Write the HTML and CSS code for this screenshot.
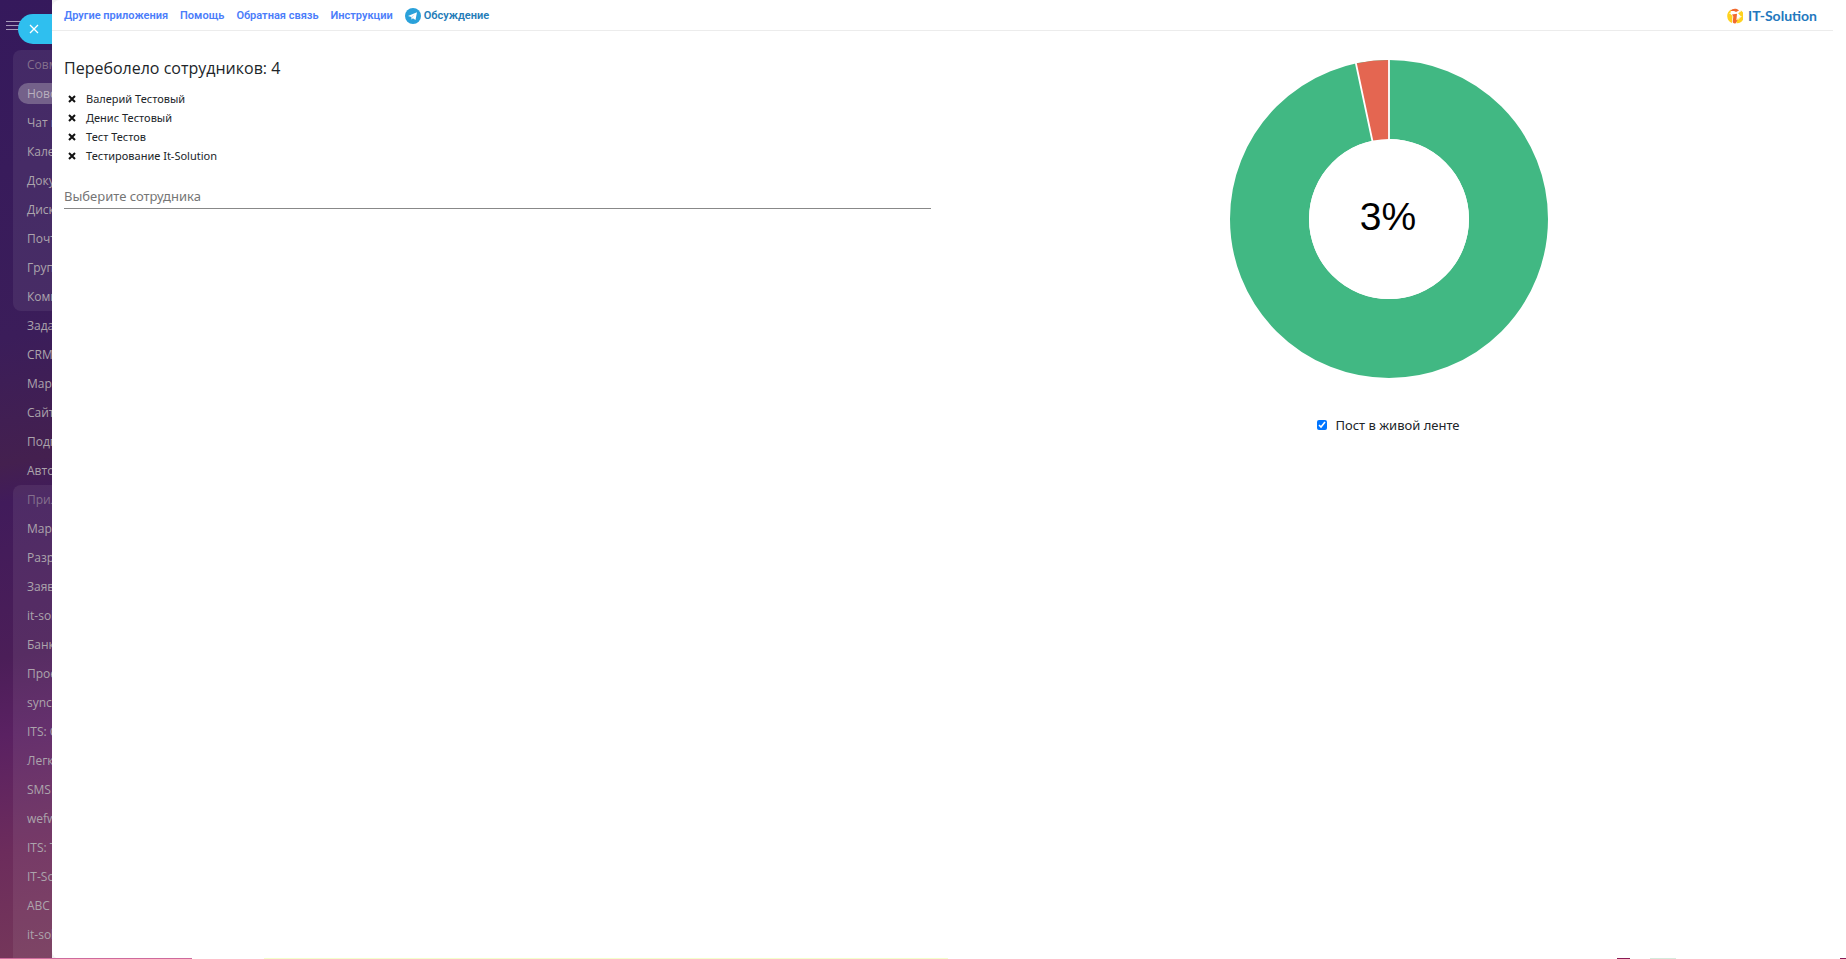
FILE: index.html
```
<!DOCTYPE html>
<html lang="ru">
<head>
    <meta charset="UTF-8">
    <meta name="viewport" content="width=device-width, initial-scale=1.0">
    <title>Переболело сотрудников</title>
    <link rel="stylesheet" href="styles.css">
</head>
<body>
    <aside class="sidebar">
        <div class="sidebar-top">
            <svg class="burger" viewBox="0 0 16 9" width="16" height="9"><path d="M0 .5h16M0 4.500h16M0 8.500h16" stroke="#a79ab8" fill="none"/></svg>
            <button class="close-btn" type="button" aria-label="Закрыть">
                <svg viewBox="0 0 10 10" width="10" height="10"><path d="M1 1l8 8M9 1l-8 8" stroke="#fff" stroke-width="1.3" fill="none"/></svg>
            </button>
        </div>
        <nav class="menu">
            <div class="menu-group">
                <div class="menu-title">Совместная</div>
                <a class="active" href="#">Новости</a>
                <a href="#">Чат и звонки</a>
                <a href="#">Календарь</a>
                <a href="#">Документы</a>
                <a href="#">Диск</a>
                <a href="#">Почта</a>
                <a href="#">Группы</a>
                <a href="#">Компания</a>
            </div>
            <a href="#">Задачи</a>
            <a href="#">CRM</a>
            <a href="#">Маркетинг</a>
            <a href="#">Сайты</a>
            <a href="#">Подпись</a>
            <a href="#">Автоматизация</a>
            <div class="menu-group">
                <div class="menu-title">Приложения</div>
                <a href="#">Маркет</a>
                <a href="#">Разработчикам</a>
                <a href="#">Заявки</a>
                <a href="#">it-solution</a>
                <a href="#">Банк</a>
                <a href="#">Проекты</a>
                <a href="#">sync</a>
                <a href="#">ITS: CRM</a>
                <a href="#">Легкий</a>
                <a href="#">SMS</a>
                <a href="#">wefwef</a>
                <a href="#">ITS: Тест</a>
                <a href="#">IT-Solution</a>
                <a href="#">ABC</a>
                <a href="#">it-solution</a>
                <a href="#">wef</a>
            </div>
        </nav>
    </aside>

    <div class="panel">
        <header class="topbar">
            <a href="#">Другие приложения</a>
            <a href="#">Помощь</a>
            <a href="#">Обратная связь</a>
            <a href="#">Инструкции</a>
            <a class="telegram" href="#">
                <svg viewBox="0 0 16 16" width="16" height="16"><circle cx="8" cy="8" r="8" fill="#2aa1da"/><path d="M3 7.9l9-3.6-1.5 7.8-2.6-1.9-1.3 1.3-.3-2.4z" fill="#fff"/><path d="M6.3 9.1l3.6-2.9-2.8 3.4-.5 1.8z" fill="#b5d5e8"/></svg>
                Обсуждение
            </a>
            <a class="logo" href="#">
                <svg viewBox="0 0 16 16" width="16" height="16">
                    <path d="M4 1.500A7.500 7.500 0 0 0 5 15L5.500 8 3.500 6z" fill="#ffd21f"/>
                    <path d="M11 5l3-2.500A7 7 0 0 1 9.500 15.200L10 11l4-2.500" fill="#ffd21f"/>
                    <path d="M3.500 3C5 .2 10 0 12 2.500L9 4 7 3z" fill="#f26a2e"/>
                    <path d="M5 6.500l5-.8-.6 6.300 1.100.5-2 2.900c-2 .3-3-.7-2.700-2.400l.5-4.500z" fill="#f26a2e"/>
                    <path d="M2.500 5.500l5-1.200 3.500.6 3-2M11 7.500v4l3.500-3.500" fill="none" stroke="#fff" stroke-width=".8"/>
                </svg>
                IT-Solution
            </a>
        </header>
        <main class="content">
            <section class="people">
                <h1>Переболело сотрудников: 4</h1>
                <ul>
                    <li><button type="button" aria-label="Удалить"><svg viewBox="0 0 8 8" width="8" height="8"><path d="M1 1l6 6M7 1l-6 6"/></svg></button>Валерий Тестовый</li>
                    <li><button type="button" aria-label="Удалить"><svg viewBox="0 0 8 8" width="8" height="8"><path d="M1 1l6 6M7 1l-6 6"/></svg></button>Денис Тестовый</li>
                    <li><button type="button" aria-label="Удалить"><svg viewBox="0 0 8 8" width="8" height="8"><path d="M1 1l6 6M7 1l-6 6"/></svg></button>Тест Тестов</li>
                    <li><button type="button" aria-label="Удалить"><svg viewBox="0 0 8 8" width="8" height="8"><path d="M1 1l6 6M7 1l-6 6"/></svg></button>Тестирование It-Solution</li>
                </ul>
                <input class="search" type="text" placeholder="Выберите сотрудника" aria-label="Выберите сотрудника">
            </section>
            <section class="stats">
                <svg class="donut" viewBox="-160 -160 320 320" width="320" height="320">
                    <circle r="119.500" fill="none" stroke="#41b883" stroke-width="79"/>
                    <path d="M0 0L0 -159A159 159 0 0 0 -33.060 -155.520Z" fill="#e46651"/>
                    <path d="M0 -162L0 0L-33.700 -158.500" fill="none" stroke="#fff" stroke-width="1.800"/>
                    <circle r="80" fill="#fff"/>
                    <text x="-1" y="11" text-anchor="middle">3%</text>
                </svg>
                <label class="feed"><input type="checkbox" checked>Пост в живой ленте</label>
            </section>
        </main>
    </div>
    <div class="page-edge"></div>
</body>
</html>
```
FILE: styles.css
```
* { box-sizing: border-box; margin: 0; padding: 0; }
body { display: flex; height: 100vh; overflow: hidden; position: relative; background: #f1f1f1; font-family: "Noto Sans", sans-serif; color: #212529; }
a { text-decoration: none; }
button { border: none; background: none; cursor: pointer; }

.sidebar { width: 52px; flex: none; overflow: hidden; background: linear-gradient(170deg, #35195c 0%, #3b1d5a 35%, #44204f 48%, #411b5b 52%, #4b1e58 68%, #5a2162 76%, #6c2c5c 88%, #75375a 100%); }
.sidebar-top { display: flex; height: 50px; padding: 14px 0 0 6px; }
.burger { flex: none; margin-top: 7px; }
.close-btn { flex: none; width: 40px; height: 30px; margin-left: -4px; padding-left: 11px; border-radius: 15px 0 0 15px; background: #2fbfef; text-align: left; position: relative; }
.close-btn svg { display: block; }

.menu { padding-left: 13px; white-space: nowrap; font-family: "Open Sans", sans-serif; }
.menu a, .menu-title { display: block; height: 29px; padding-left: 14px; font-size: 12px; line-height: 29px; font-weight: 500; color: #aca4ac; }
.menu .menu-title { font-weight: 400; color: #84708d; }
.menu-group { border-radius: 8px 0 0 8px; background: rgba(255, 255, 255, 0.07); }
.menu .active { height: 21px; margin: 4px 0 4px 5px; padding-left: 9px; line-height: 21px; border-radius: 10px 0 0 10px; background: #74618a; color: #b9b0be; }

.panel { flex: 1; min-width: 0; background: #fff; border-radius: 8px 0 0 8px; }
.topbar { display: flex; align-items: center; gap: 12px; height: 31px; margin-right: 13px; padding: 1px 16px 0 12px; border-bottom: 1px solid #ececec; font: 600 11px/16px Roboto, sans-serif; }
.topbar a { color: #4b7dfa; }
.topbar .telegram { display: flex; gap: 3px; color: #247cb8; }
.topbar .logo { display: flex; gap: 5px; margin-left: auto; font: 700 14px/16px Lato, sans-serif; color: #2378be; }

.content { display: grid; grid-template-columns: 1fr 1fr; margin-right: 12px; }
.people { padding: 24px 12px 0; }
.people h1 { font: 400 16px/26px "Open Sans", sans-serif; }
.people ul { margin-top: 8px; list-style: none; }
.people li { display: flex; align-items: center; height: 19px; font-size: 11px; }
.people li button { display: flex; width: 22px; padding-left: 4px; }
.people li path { stroke: #111; stroke-width: 2; }
.search { display: block; width: 100%; height: 25px; margin-top: 19px; border: none; border-bottom: 1px solid #888; font: 13px "Noto Sans", sans-serif; outline: none; }
.search::placeholder { color: #757575; }

.stats { display: flex; flex-direction: column; align-items: center; padding-top: 28px; }
.donut text { font: 39px "Liberation Sans", sans-serif; fill: #000; }
.feed { display: flex; align-items: center; gap: 8px; margin-top: 36px; font-size: 13px; line-height: 20px; }
.feed input { width: 10px; height: 10px; accent-color: #0075ff; }

/* strip of the page behind the panel */
.page-edge { position: absolute; left: 0; right: 0; bottom: 0; height: 1px; background: linear-gradient(90deg, #cf6a9d 192px, #fff 192px 264px, #f4ffcb 264px 948px, #fff 948px 1617px, #8a1b55 1617px 1630px, #fff 1630px 1650px, #d5eadc 1650px 1676px, #fff 1676px 1840px, #8a1b55 1840px); }
```
